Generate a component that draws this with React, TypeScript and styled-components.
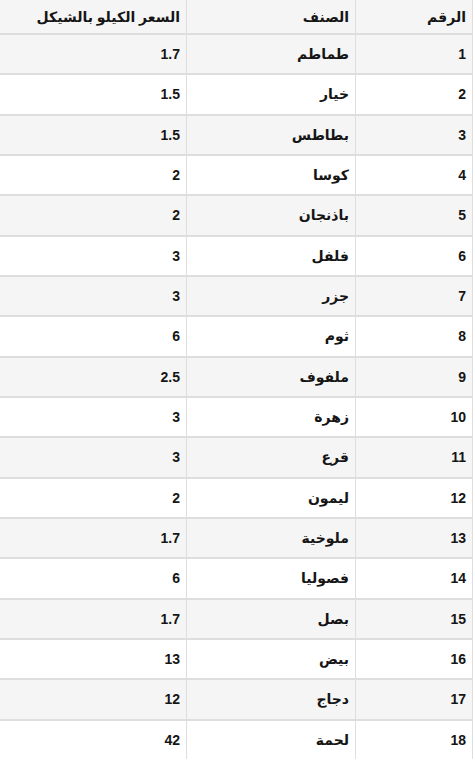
import React from 'react';
import styled, { createGlobalStyle } from 'styled-components';

const GlobalStyle = createGlobalStyle`
  html, body {
    margin: 0;
    padding: 0;
    background: #ffffff;
  }
  body {
    font-family: "Liberation Sans", "DejaVu Sans", Arial, sans-serif;
    color: #151515;
  }
`;

const Wrapper = styled.div`
  direction: rtl;
  padding-right: 2px;
  width: 475px;
  box-sizing: border-box;
`;

const Table = styled.div`
  display: flex;
  flex-direction: column;
  width: 473px;
`;

const Row = styled.div<{ $striped?: boolean; $header?: boolean; $last?: boolean }>`
  display: grid;
  grid-template-columns: 118px 169px 186px;
  height: ${(p) => (p.$header ? '35px' : p.$last ? '38.33px' : '40.33px')};
  background: ${(p) => (p.$striped ? '#f5f5f5' : '#ffffff')};
  border-bottom: ${(p) => (p.$last ? 'none' : '2px solid #dedede')};
  box-sizing: border-box;
`;

const Cell = styled.div<{ $edge?: 'right' | 'left' }>`
  display: flex;
  align-items: center;
  justify-content: flex-start;
  padding: 0 6px;
  font-size: 14px;
  font-weight: bold;
  white-space: nowrap;
  box-sizing: border-box;
  border-left: ${(p) => (p.$edge === 'left' ? 'none' : '1px solid #dedede')};
  border-right: ${(p) => (p.$edge === 'right' ? '1px solid #dedede' : 'none')};
`;

const items: [string, string][] = [
  ['طماطم', '1.7'],
  ['خيار', '1.5'],
  ['بطاطس', '1.5'],
  ['كوسا', '2'],
  ['باذنجان', '2'],
  ['فلفل', '3'],
  ['جزر', '3'],
  ['ثوم', '6'],
  ['ملفوف', '2.5'],
  ['زهرة', '3'],
  ['قرع', '3'],
  ['ليمون', '2'],
  ['ملوخية', '1.7'],
  ['فصوليا', '6'],
  ['بصل', '1.7'],
  ['بيض', '13'],
  ['دجاج', '12'],
  ['لحمة', '42'],
];

export default function App() {
  return (
    <>
      <GlobalStyle />
      <Wrapper>
        <Table>
          <Row $header $striped>
            <Cell $edge="right">الرقم</Cell>
            <Cell>الصنف</Cell>
            <Cell $edge="left">السعر الكيلو بالشيكل</Cell>
          </Row>
          {items.map(([name, price], i) => (
            <Row key={name} $striped={i % 2 === 0} $last={i === items.length - 1}>
              <Cell $edge="right">{i + 1}</Cell>
              <Cell>{name}</Cell>
              <Cell $edge="left">{price}</Cell>
            </Row>
          ))}
        </Table>
      </Wrapper>
    </>
  );
}
